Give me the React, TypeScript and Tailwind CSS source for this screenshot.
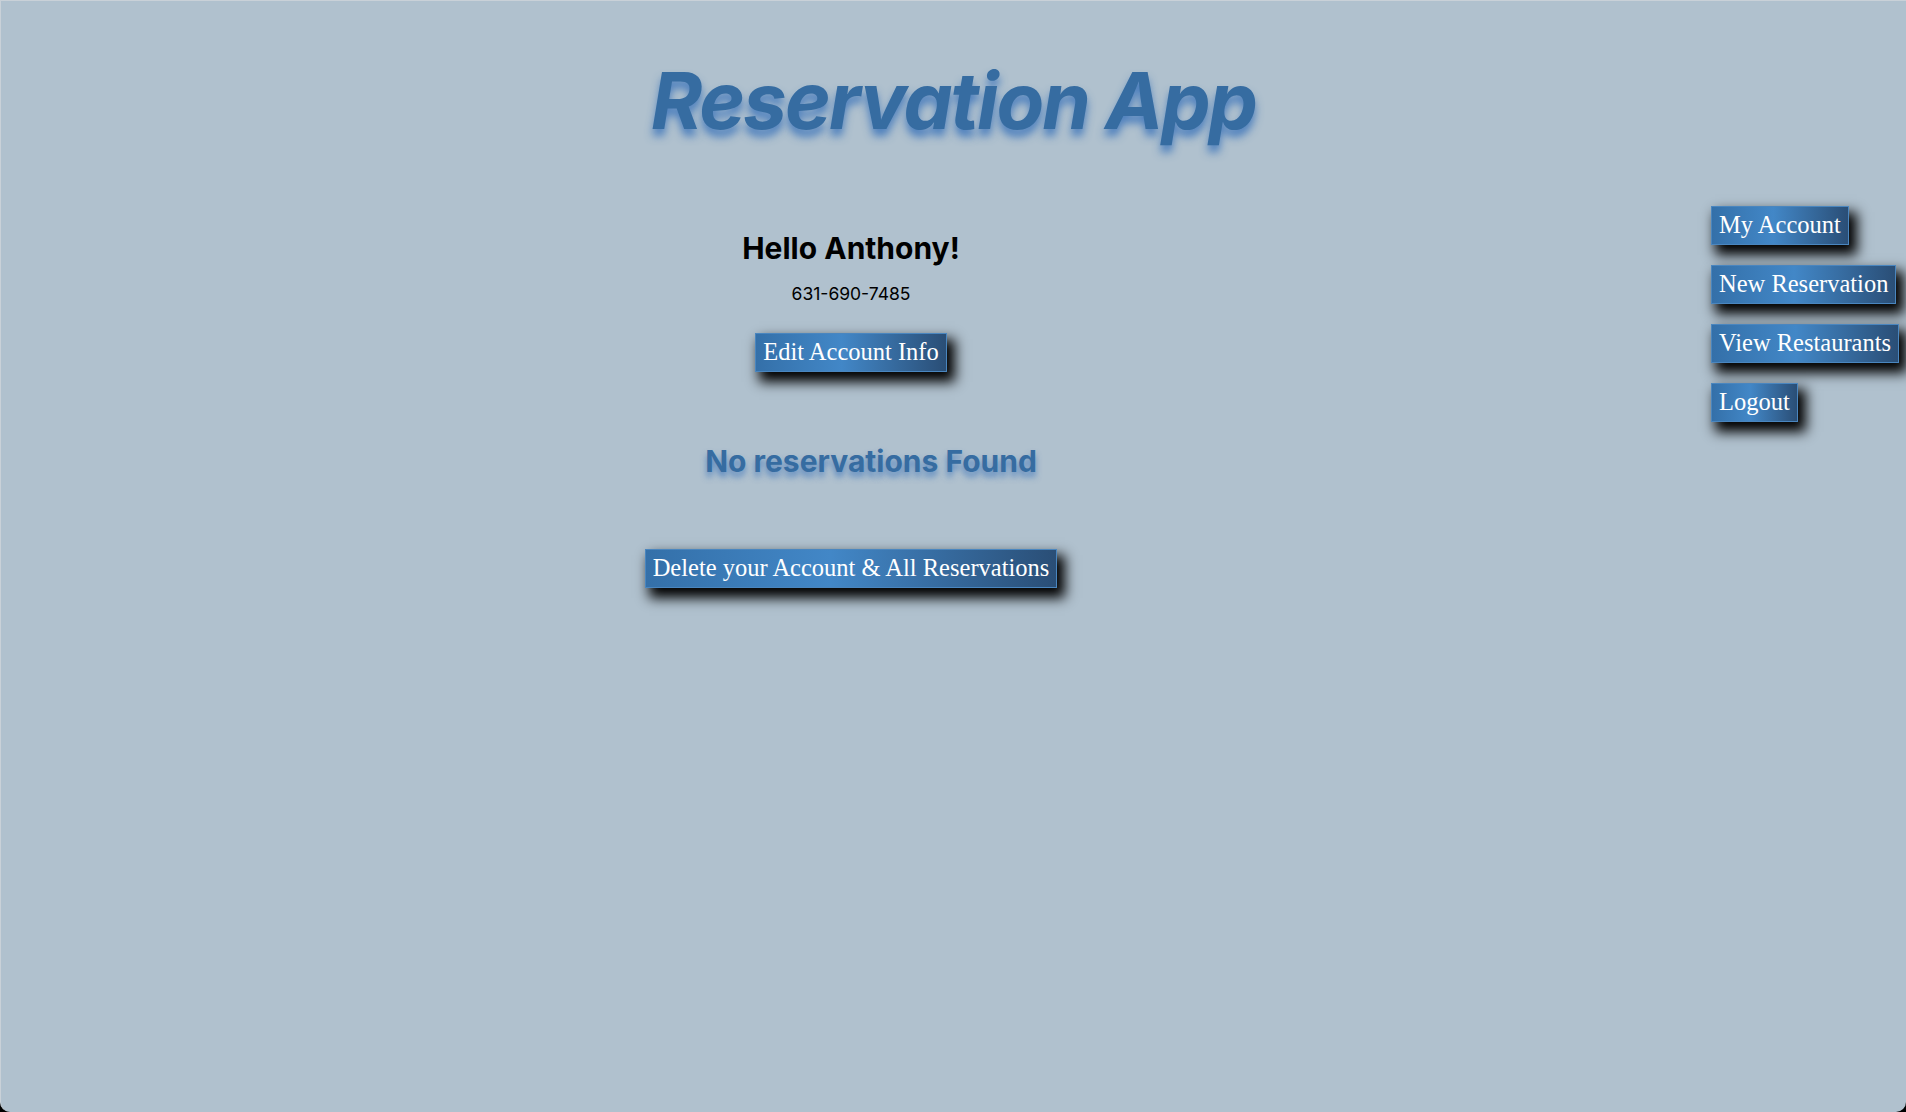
import React from "react";

const btn =
  "h-[39px] flex items-center px-[7px] border border-[#4a86bf] bg-[linear-gradient(to_right,#3470a9,#4287c7_45%,#2a4e76)] text-white text-[24.5px] whitespace-nowrap shadow-[6px_8px_12px_2px_#000] font-['Liberation_Serif',serif]";

const navItems = ["My Account", "New Reservation", "View Restaurants", "Logout"];

export default function App() {
  return (
    <div className="w-full h-[1112px] bg-black overflow-hidden">
      <div className="h-full bg-[#b0c1ce] border-t border-l border-[#c9d1d8] rounded-b-[10px] font-['Inter',sans-serif]">
        <h1 className="pt-[61px] text-center text-[78px] leading-none font-bold italic tracking-[-2px] text-[#366ca1] [text-shadow:0_7px_8px_rgba(50,110,185,0.8)]">
          Reservation App
        </h1>

        <div className="flex items-start">
          <div className="w-[1700px] flex flex-col items-center pt-[93px]">
            <h2 className="text-[30px] leading-none font-bold text-black">
              Hello Anthony!
            </h2>
            <p className="mt-[22px] text-[17.5px] leading-none text-black">
              631-690-7485
            </p>
            <button className={`mt-[30px] ${btn}`}>Edit Account Info</button>
            <h3 className="mt-[74px] ml-[40px] text-[30px] leading-none font-bold text-[#366ca1] [text-shadow:0_5px_6px_rgba(50,110,185,0.7)]">
              No reservations Found
            </h3>
            <button className={`mt-[73px] ${btn}`}>
              Delete your Account &amp; All Reservations
            </button>
          </div>

          <nav className="ml-[10px] pt-[66px] flex flex-col items-start gap-[20px]">
            {navItems.map((item) => (
              <button key={item} className={btn}>
                {item}
              </button>
            ))}
          </nav>
        </div>
      </div>
    </div>
  );
}
